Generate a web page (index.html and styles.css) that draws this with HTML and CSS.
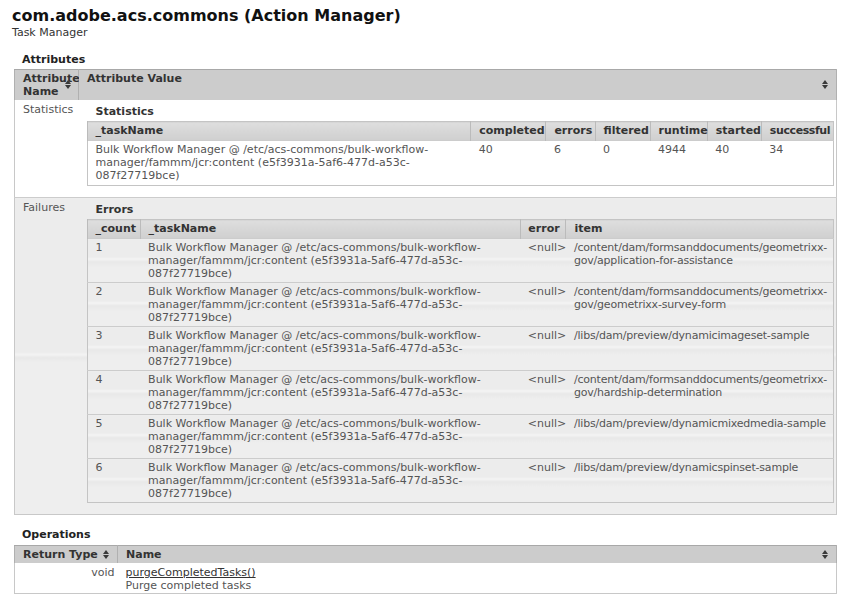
FILE: index.html
```html
<!DOCTYPE html>
<html>
<head>
<meta charset="utf-8">
<link rel="stylesheet" href="styles.css">
</head>
<body>
<h1 class="title">com.adobe.acs.commons (Action Manager)</h1>
<div class="subtitle">Task Manager</div>

<h2 class="section">Attributes</h2>
<table class="grid">
  <thead>
    <tr>
      <th class="w-attr-name">Attribute Name<span class="sort"><svg width="6" height="9" viewBox="0 0 6 9"><path d="M3 0L6 4H0Z M0 5H6L3 9Z" fill="#3a3a3a"/></svg></span></th>
      <th class="w-attr-value">Attribute Value<span class="sort"><svg width="6" height="9" viewBox="0 0 6 9"><path d="M3 0L6 4H0Z M0 5H6L3 9Z" fill="#3a3a3a"/></svg></span></th>
    </tr>
  </thead>
  <tbody>
    <tr class="row-white first">
      <td class="label">Statistics</td>
      <td class="value">
        <h3 class="sub-title">Statistics</h3>
        <table class="sub stats">
          <thead>
            <tr>
              <th class="s-task">_taskName</th>
              <th class="s-completed">completed</th>
              <th class="s-errors">errors</th>
              <th class="s-filtered">filtered</th>
              <th class="s-runtime">runtime</th>
              <th class="s-started">started</th>
              <th class="s-successful">successful</th>
            </tr>
          </thead>
          <tbody>
            <tr>
              <td>Bulk Workflow Manager @ /etc/acs-commons/bulk-workflow-manager/fammm/jcr:content (e5f3931a-5af6-477d-a53c-087f27719bce)</td>
              <td>40</td>
              <td>6</td>
              <td>0</td>
              <td>4944</td>
              <td>40</td>
              <td>34</td>
            </tr>
          </tbody>
        </table>
      </td>
    </tr>
    <tr class="row-glass">
      <td class="label">Failures</td>
      <td class="value">
        <h3 class="sub-title">Errors</h3>
        <table class="sub errors">
          <thead>
            <tr>
              <th class="e-count">_count</th>
              <th class="e-task">_taskName</th>
              <th class="e-error">error</th>
              <th class="e-item">item</th>
            </tr>
          </thead>
          <tbody>
            <tr>
              <td>1</td>
              <td>Bulk Workflow Manager @ /etc/acs-commons/bulk-workflow-manager/fammm/jcr:content (e5f3931a-5af6-477d-a53c-087f27719bce)</td>
              <td class="null">&lt;null&gt;</td>
              <td class="item">/content/dam/formsanddocuments/geometrixx-gov/application-for-assistance</td>
            </tr>
            <tr>
              <td>2</td>
              <td>Bulk Workflow Manager @ /etc/acs-commons/bulk-workflow-manager/fammm/jcr:content (e5f3931a-5af6-477d-a53c-087f27719bce)</td>
              <td class="null">&lt;null&gt;</td>
              <td class="item">/content/dam/formsanddocuments/geometrixx-gov/geometrixx-survey-form</td>
            </tr>
            <tr>
              <td>3</td>
              <td>Bulk Workflow Manager @ /etc/acs-commons/bulk-workflow-manager/fammm/jcr:content (e5f3931a-5af6-477d-a53c-087f27719bce)</td>
              <td class="null">&lt;null&gt;</td>
              <td class="item">/libs/dam/preview/dynamicimageset-sample</td>
            </tr>
            <tr>
              <td>4</td>
              <td>Bulk Workflow Manager @ /etc/acs-commons/bulk-workflow-manager/fammm/jcr:content (e5f3931a-5af6-477d-a53c-087f27719bce)</td>
              <td class="null">&lt;null&gt;</td>
              <td class="item">/content/dam/formsanddocuments/geometrixx-gov/hardship-determination</td>
            </tr>
            <tr>
              <td>5</td>
              <td>Bulk Workflow Manager @ /etc/acs-commons/bulk-workflow-manager/fammm/jcr:content (e5f3931a-5af6-477d-a53c-087f27719bce)</td>
              <td class="null">&lt;null&gt;</td>
              <td class="item nowrap">/libs/dam/preview/dynamicmixedmedia-sample</td>
            </tr>
            <tr>
              <td>6</td>
              <td>Bulk Workflow Manager @ /etc/acs-commons/bulk-workflow-manager/fammm/jcr:content (e5f3931a-5af6-477d-a53c-087f27719bce)</td>
              <td class="null">&lt;null&gt;</td>
              <td class="item">/libs/dam/preview/dynamicspinset-sample</td>
            </tr>
          </tbody>
        </table>
      </td>
    </tr>
  </tbody>
</table>

<h2 class="section ops-title">Operations</h2>
<table class="grid ops">
  <thead>
    <tr>
      <th class="w-ret">Return Type<span class="sort"><svg width="6" height="9" viewBox="0 0 6 9"><path d="M3 0L6 4H0Z M0 5H6L3 9Z" fill="#3a3a3a"/></svg></span></th>
      <th class="w-opname">Name<span class="sort"><svg width="6" height="9" viewBox="0 0 6 9"><path d="M3 0L6 4H0Z M0 5H6L3 9Z" fill="#3a3a3a"/></svg></span></th>
    </tr>
  </thead>
  <tbody>
    <tr class="first">
      <td class="ret">void</td>
      <td class="opname"><a href="#" class="op-link">purgeCompletedTasks()</a><div class="op-desc">Purge completed tasks</div></td>
    </tr>
  </tbody>
</table>
</body>
</html>
```

FILE: styles.css
```css
body {
  margin: 0;
  font-family: "DejaVu Sans", Verdana, sans-serif;
  font-size: 11px;
  line-height: 13px;
  color: #555;
  background: #fff;
}

th, td {
  box-sizing: border-box;
}

.title {
  margin: 0;
  padding: 6px 0 0 12px;
  font-size: 16px;
  line-height: 20px;
  font-weight: bold;
  color: #111;
}

.subtitle {
  padding-left: 12px;
  color: #333;
}

.section {
  margin: 14px 0 3px 22px;
  font-size: 11px;
  line-height: 13px;
  font-weight: bold;
  color: #222;
}

.ops-title {
  margin-top: 13px;
  margin-bottom: 4px;
}

/* outer grids */
.grid {
  margin-left: 14px;
  width: 822px;
  border-collapse: collapse;
  table-layout: fixed;
  border: 1px solid #c8c8c8;
}

.grid > thead > tr > th {
  position: relative;
  background: #cccccc;
  border-top: 1px solid #a8a8a8;
  border-left: 1px solid #b0b0b0;
  border-right: 1px solid #b0b0b0;
  color: #333;
  font-weight: bold;
  text-align: left;
  vertical-align: top;
  padding: 2px 8px;
}

.sort {
  position: absolute;
  right: 8px;
  top: 50%;
  margin-top: -5px;
  display: flex;
}

.w-attr-name { width: 64px; padding-right: 0 !important; }
.w-attr-name .sort { right: 7px; }
.w-attr-value { width: 758px; }
.w-ret { width: 103px; }
.w-opname { width: 719px; }

.grid > tbody > tr > td {
  vertical-align: top;
  border-top: 1px solid #cccccc;
}

.grid > tbody > tr.first > td {
  border-top: none;
}

.label {
  padding: 3px 8px;
  color: #555;
}

.value {
  padding: 3px 2px 11px 8px;
}

.row-white > td {
  background: #fff;
}

.row-glass > td,
.errors td {
  background: linear-gradient(to bottom,
    #ececec 0,
    #ececec calc(50% - 4px),
    #f4f4f4 calc(50% - 2px),
    #e8e8e8 calc(50% + 1px),
    #eeeeee calc(50% + 6px),
    #eeeeee 100%);
}

.sub-title {
  margin: 0 0 3px;
  padding: 2px 0 0 9px;
  font-size: 11px;
  line-height: 13px;
  font-weight: bold;
  color: #333;
}

/* inner tables */
.sub {
  width: 100%;
  border-collapse: collapse;
  table-layout: fixed;
  border: 1px solid #c4c4c4;
}

.sub th {
  background: linear-gradient(to bottom, #dedede, #cfcfcf);
  border-left: 1px solid #bbbbbb;
  font-weight: bold;
  color: #333;
  text-align: left;
  padding: 2px 4px 3px 8px;
  white-space: nowrap;
}

.sub td {
  padding: 2px 4px 2px 8px;
  border-top: 1px solid #cccccc;
  vertical-align: top;
  color: #555;
}

.stats td {
  background: #fff;
  padding-bottom: 3px;
}

.s-task { width: 383px; }
.s-completed { width: 75px; }
.s-errors { width: 49px; }
.s-filtered { width: 55px; }
.s-runtime { width: 57px; }
.s-started { width: 54px; }
.s-successful { width: 72px; letter-spacing: -0.4px; padding-right: 0 !important; }

.e-count { width: 53px; }
.e-task { width: 380px; }
.e-error { width: 45px; padding-left: 7px !important; }
.e-item { width: 267px; }

.errors td.null {
  padding-left: 7px;
  padding-right: 0;
  white-space: nowrap;
}

.errors td.item {
  letter-spacing: -0.2px;
  padding-right: 0;
}

.nowrap {
  white-space: nowrap;
}

/* operations */
.ret {
  text-align: right;
  padding: 3px 3px 1px 8px;
}

.opname {
  padding: 3px 8px 1px 8px;
}

.op-link {
  color: #333;
  text-decoration: underline;
}

.op-desc {
  color: #555;
}
```
